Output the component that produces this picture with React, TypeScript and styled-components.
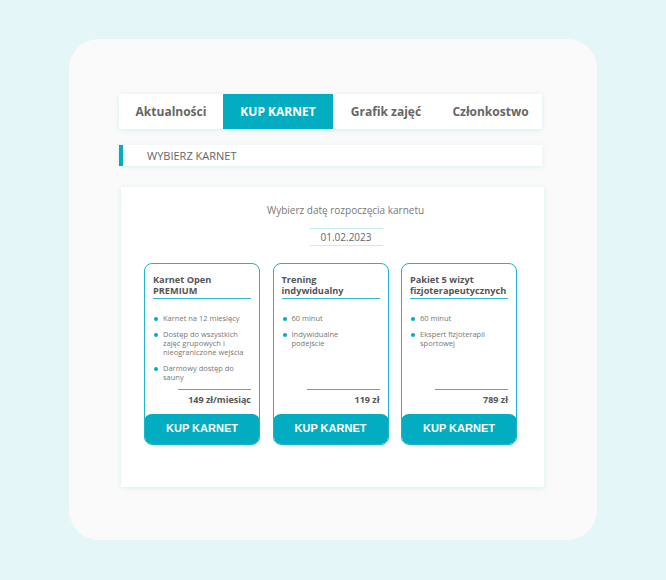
import React from 'react';
import styled, { createGlobalStyle } from 'styled-components';

const teal = '#02adc1';

const GlobalStyle = createGlobalStyle`
  html, body {
    margin: 0;
    padding: 0;
    background: #e4f6f7;
    font-family: 'Open Sans', 'Noto Sans', sans-serif;
  }
  * { box-sizing: border-box; }
`;

const Page = styled.div`
  width: 666px;
  height: 580px;
  padding: 39px 0 0 69px;
`;

const Frame = styled.div`
  width: 528px;
  height: 501px;
  border-radius: 30px;
  background: #fafafa;
  padding: 55px 0 0 50px;
`;

const Nav = styled.nav`
  display: flex;
  width: 423px;
  height: 35px;
  background: #fff;
  box-shadow: 0 1px 6px rgba(0, 173, 193, 0.14);
`;

const Tab = styled.div<{ $w: number; $active?: boolean }>`
  width: ${p => p.$w}px;
  display: flex;
  align-items: center;
  justify-content: center;
  font-size: 12px;
  font-weight: 700;
  color: ${p => (p.$active ? '#fff' : '#666')};
  background: ${p => (p.$active ? teal : 'transparent')};
`;

const SectionHeader = styled.div`
  margin-top: 16px;
  width: 423px;
  height: 21px;
  background: #fff;
  border-left: 4px solid ${teal};
  box-shadow: 0 1px 5px rgba(0, 173, 193, 0.12);
  display: flex;
  align-items: center;
  padding-left: 24px;
  font-size: 11px;
  color: #666;
`;

const Panel = styled.section`
  margin: 21px 0 0 2px;
  width: 423px;
  height: 300px;
  background: #fff;
  box-shadow: 0 1px 6px rgba(0, 173, 193, 0.14);
  display: flex;
  flex-direction: column;
  align-items: center;
  padding-top: 16px;
`;

const Prompt = styled.div`
  margin-left: 26px;
  font-size: 10px;
  color: #777;
  line-height: 14px;
`;

const DateBox = styled.div`
  margin: 11px 0 0 27px;
  width: 73px;
  height: 18px;
  border-top: 1px solid #c4ecf1;
  border-bottom: 1px solid #c4ecf1;
  font-size: 10px;
  color: #666;
  display: flex;
  align-items: center;
  justify-content: center;
`;

const Cards = styled.div`
  margin-top: 17px;
  display: flex;
  gap: 12.5px;
  margin-left: -4px;
`;

const Card = styled.div`
  width: 116px;
  height: 182px;
  border: 1px solid #1cb6c7;
  border-radius: 8px;
  display: flex;
  flex-direction: column;
  overflow: hidden;
`;

const CardBody = styled.div`
  flex: 1;
  padding: 11px 8px 0 8px;
  display: flex;
  flex-direction: column;
`;

const Title = styled.div`
  font-size: 9.2px;
  font-weight: 700;
  color: #555;
  line-height: 10.5px;
  padding-bottom: 2px;
  border-bottom: 1.5px solid #2cbccc;
`;

const List = styled.ul`
  list-style: none;
  margin: 15px 0 0 0;
  padding: 0;
  display: flex;
  flex-direction: column;
  gap: 7px;
`;

const Item = styled.li`
  position: relative;
  padding-left: 10px;
  font-size: 7.5px;
  line-height: 9px;
  color: #777;
  &::before {
    content: '';
    position: absolute;
    left: 1px;
    top: 2.5px;
    width: 4px;
    height: 4px;
    border-radius: 50%;
    background: ${teal};
  }
`;

const PriceRow = styled.div`
  margin-top: auto;
  margin-bottom: 8px;
  display: flex;
  flex-direction: column;
  align-items: flex-end;
`;

const PriceLine = styled.div`
  width: 73px;
  border-top: 1.5px solid #2cbccc;
`;

const Price = styled.div`
  margin-top: 3px;
  font-size: 9px;
  font-weight: 700;
  color: #555;
`;

const BuyButton = styled.button`
  flex: none;
  height: 31px;
  margin: 0 -1px -1px -1px;
  padding: 0 0 3px 0;
  border: none;
  border-radius: 8px;
  background: ${teal};
  color: #fff;
  font-family: 'Liberation Sans', Arial, sans-serif;
  font-size: 11px;
  font-weight: 700;
  cursor: pointer;
`;

const tabs = [
  { label: 'Aktualności', w: 104 },
  { label: 'KUP KARNET', w: 110, active: true },
  { label: 'Grafik zajęć', w: 106 },
  { label: 'Członkostwo', w: 103 },
];

const offers = [
  {
    title: ['Karnet Open', 'PREMIUM'],
    items: [
      ['Karnet na 12 miesięcy'],
      ['Dostęp do wszystkich', 'zajęć grupowych i', 'nieograniczone wejścia'],
      ['Darmowy dostęp do', 'sauny'],
    ],
    price: '149 zł/miesiąc',
  },
  {
    title: ['Trening', 'indywidualny'],
    items: [['60 minut'], ['Indywidualne', 'podejście']],
    price: '119 zł',
  },
  {
    title: ['Pakiet 5 wizyt', 'fizjoterapeutycznych'],
    items: [['60 minut'], ['Ekspert fizjoterapii', 'sportowej']],
    price: '789 zł',
  },
];

function Lines({ lines }: { lines: string[] }) {
  return (
    <>
      {lines.map((l, i) => (
        <React.Fragment key={i}>
          {i > 0 && <br />}
          {l}
        </React.Fragment>
      ))}
    </>
  );
}

export default function App() {
  return (
    <Page>
      <GlobalStyle />
      <Frame>
        <Nav>
          {tabs.map(t => (
            <Tab key={t.label} $w={t.w} $active={t.active}>
              {t.label}
            </Tab>
          ))}
        </Nav>
        <SectionHeader>WYBIERZ KARNET</SectionHeader>
        <Panel>
          <Prompt>Wybierz datę rozpoczęcia karnetu</Prompt>
          <DateBox>01.02.2023</DateBox>
          <Cards>
            {offers.map(o => (
              <Card key={o.price}>
                <CardBody>
                  <Title>
                    <Lines lines={o.title} />
                  </Title>
                  <List>
                    {o.items.map((it, i) => (
                      <Item key={i}>
                        <Lines lines={it} />
                      </Item>
                    ))}
                  </List>
                  <PriceRow>
                    <PriceLine />
                    <Price>{o.price}</Price>
                  </PriceRow>
                </CardBody>
                <BuyButton>KUP KARNET</BuyButton>
              </Card>
            ))}
          </Cards>
        </Panel>
      </Frame>
    </Page>
  );
}
